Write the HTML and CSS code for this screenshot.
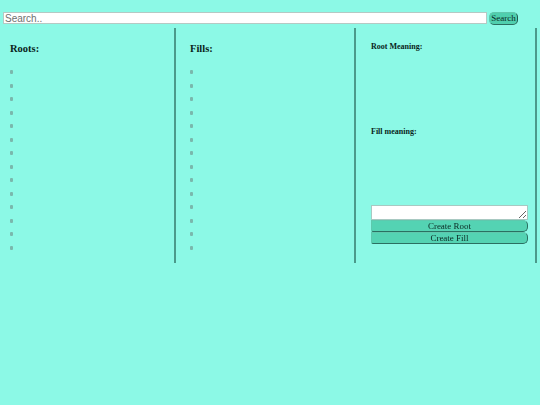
FILE: index.html
```html
<!DOCTYPE html>
<html>
<head>
<meta charset="utf-8">
<link rel="stylesheet" href="styles.css">
</head>
<body>
<div class="searchbar">
  <input class="search-input" type="text" placeholder="Search..">
  <button class="search-btn">Search</button>
</div>
<div class="columns">
  <div class="col col-roots">
    <h3 class="col-title">Roots:</h3>
    <ul class="items">
      <li><span class="mark"></span></li><li><span class="mark"></span></li><li><span class="mark"></span></li><li><span class="mark"></span></li><li><span class="mark"></span></li><li><span class="mark"></span></li><li><span class="mark"></span></li><li><span class="mark"></span></li><li><span class="mark"></span></li><li><span class="mark"></span></li><li><span class="mark"></span></li><li><span class="mark"></span></li><li><span class="mark"></span></li><li><span class="mark"></span></li>
    </ul>
  </div>
  <div class="col col-fills">
    <h3 class="col-title">Fills:</h3>
    <ul class="items">
      <li><span class="mark"></span></li><li><span class="mark"></span></li><li><span class="mark"></span></li><li><span class="mark"></span></li><li><span class="mark"></span></li><li><span class="mark"></span></li><li><span class="mark"></span></li><li><span class="mark"></span></li><li><span class="mark"></span></li><li><span class="mark"></span></li><li><span class="mark"></span></li><li><span class="mark"></span></li><li><span class="mark"></span></li><li><span class="mark"></span></li>
    </ul>
  </div>
  <div class="col col-meaning">
    <h4 class="meaning-title">Root Meaning:</h4>
    <div class="meaning-body"></div>
    <h4 class="meaning-title">Fill meaning:</h4>
    <div class="meaning-body meaning-body-2"></div>
    <textarea class="new-text"></textarea>
    <button class="create-btn">Create Root</button>
    <button class="create-btn">Create Fill</button>
  </div>
</div>
</body>
</html>
```
FILE: styles.css
```css
html, body {
  margin: 0;
  padding: 0;
  background: #8cf9e6;
  font-family: "Liberation Serif", "Times New Roman", serif;
  color: #000;
}
.searchbar {
  display: flex;
  align-items: center;
  gap: 2px;
  padding: 11px 0 0 3px;
  height: 14px;
}
.search-input {
  box-sizing: border-box;
  width: 484px;
  height: 12px;
  margin: 0;
  padding: 0 1px;
  border: 1px solid #b5c9c4;
  background: #fff;
  font-family: "Liberation Sans", Arial, sans-serif;
  font-size: 10px;
  outline: none;
}
.search-input::placeholder {
  color: #6f6f6f;
}
.search-btn {
  box-sizing: border-box;
  height: 13px;
  width: 29px;
  margin: 0;
  padding: 0;
  border: 1px solid #5fc8ad;
  border-right: 1.5px solid #1f5a4e;
  border-bottom-color: #2b6f61;
  border-radius: 5px;
  background: #4fcfae;
  font-family: "Liberation Serif", serif;
  font-size: 9px;
  line-height: 10px;
  color: #0b2a24;
}
.columns {
  display: flex;
  margin-top: 3px;
  height: 235px;
}
.col {
  box-sizing: border-box;
  border-right: 2px solid #4b9a8b;
}
.col-roots {
  width: 176px;
  padding-left: 10px;
}
.col-fills {
  width: 180px;
  padding-left: 14px;
}
.col-title {
  margin: 14px 0 0;
  font-size: 10.5px;
  line-height: 13px;
  font-weight: bold;
  color: #0a1f1b;
}
.items {
  list-style: none;
  margin: 15px 0 0;
  padding: 0;
}
.items li {
  height: 13.5px;
}
.mark {
  display: block;
  width: 3px;
  height: 4px;
  background: #7ab8ad;
  border-radius: 1px;
}
.col-meaning {
  display: flex;
  flex-direction: column;
  width: 181px;
  padding: 0 8px 0 15px;
}
.meaning-title {
  margin: 14px 0 0;
  font-size: 8px;
  line-height: 10px;
  font-weight: bold;
  color: #0a1f1b;
}
.meaning-body {
  height: 61px;
}
.meaning-body-2 {
  height: 68px;
}
.new-text {
  box-sizing: border-box;
  width: 157px;
  height: 15px;
  margin: 0;
  padding: 0;
  border: 1px solid #a8c9c2;
  background: #fff;
  resize: vertical;
}
.create-btn {
  box-sizing: border-box;
  width: 157px;
  height: 12px;
  margin: 0;
  padding: 0;
  background: #54d3b3;
  border: 1px solid #2b6f61;
  border-top-color: #5fc8ad;
  border-left-color: #5fc8ad;
  border-radius: 0 5px 5px 2px;
  font-family: "Liberation Serif", serif;
  font-size: 9px;
  line-height: 10px;
  color: #0b2a24;
}
```
